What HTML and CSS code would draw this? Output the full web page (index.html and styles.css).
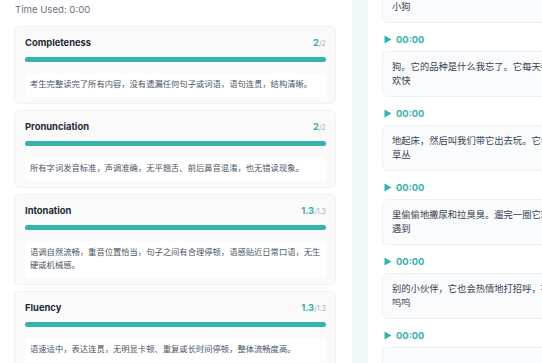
FILE: index.html
```html
<!DOCTYPE html>
<html lang="zh">
<head>
<meta charset="utf-8">
<title>Evaluation</title>
<link rel="stylesheet" href="styles.css">
</head>
<body>
<div class="page">
  <section class="left">
    <div class="time">Time Used: 0:00</div>
    <div class="card">
      <div class="card-head"><span class="title">Completeness</span><span class="score"><b>2</b>/2</span></div>
      <div class="bar"><div class="fill" style="width:100%"></div></div>
      <div class="desc">考生完整读完了所有内容，没有遗漏任何句子或词语，语句连贯，结构清晰。</div>
    </div>
    <div class="card">
      <div class="card-head"><span class="title">Pronunciation</span><span class="score"><b>2</b>/2</span></div>
      <div class="bar"><div class="fill" style="width:100%"></div></div>
      <div class="desc">所有字词发音标准，声调准确，无平翘舌、前后鼻音混淆，也无错读现象。</div>
    </div>
    <div class="card">
      <div class="card-head"><span class="title">Intonation</span><span class="score"><b>1.3</b>/1.3</span></div>
      <div class="bar"><div class="fill" style="width:100%"></div></div>
      <div class="desc">语调自然流畅，重音位置恰当，句子之间有合理停顿，语感贴近日常口语，无生硬或机械感。</div>
    </div>
    <div class="card">
      <div class="card-head"><span class="title">Fluency</span><span class="score"><b>1.3</b>/1.3</span></div>
      <div class="bar"><div class="fill" style="width:100%"></div></div>
      <div class="desc">语速适中，表达连贯，无明显卡顿、重复或长时间停顿，整体流畅度高。</div>
    </div>
  </section>
  <div class="strip"></div>
  <section class="right">
    <div class="list">
      <div class="seg">我家有一只可爱的<br>小狗</div>
      <div class="play"><svg class="tri" viewBox="0 0 8 9" width="8" height="9"><path d="M0.5 0.5 L7.5 4.5 L0.5 8.5 Z" fill="#38b2ac"/></svg><span>00:00</span></div>
      <div class="seg">狗。它的品种是什么我忘了。它每天都很开心<br>欢快</div>
      <div class="play"><svg class="tri" viewBox="0 0 8 9" width="8" height="9"><path d="M0.5 0.5 L7.5 4.5 L0.5 8.5 Z" fill="#38b2ac"/></svg><span>00:00</span></div>
      <div class="seg">地起床，然后叫我们带它出去玩。它会跑到<br>草丛</div>
      <div class="play"><svg class="tri" viewBox="0 0 8 9" width="8" height="9"><path d="M0.5 0.5 L7.5 4.5 L0.5 8.5 Z" fill="#38b2ac"/></svg><span>00:00</span></div>
      <div class="seg">里偷偷地撒尿和拉臭臭。遛完一圈它就回家<br>遇到</div>
      <div class="play"><svg class="tri" viewBox="0 0 8 9" width="8" height="9"><path d="M0.5 0.5 L7.5 4.5 L0.5 8.5 Z" fill="#38b2ac"/></svg><span>00:00</span></div>
      <div class="seg">别的小伙伴，它也会热情地打招呼，有时候<br>呜呜</div>
      <div class="play"><svg class="tri" viewBox="0 0 8 9" width="8" height="9"><path d="M0.5 0.5 L7.5 4.5 L0.5 8.5 Z" fill="#38b2ac"/></svg><span>00:00</span></div>
      <div class="seg seg-empty"></div>
    </div>
  </section>
</div>
</body>
</html>
```

FILE: styles.css
```css
html, body {
  margin: 0;
  padding: 0;
  width: 542px;
  height: 363px;
  overflow: hidden;
  background: #ffffff;
}
.page {
  display: flex;
  height: 363px;
  font-family: Inter, "Noto Sans CJK SC", sans-serif;
}
.left {
  width: 322px;
  flex: none;
  padding: 0 16px 0 14px;
  background: #ffffff;
  display: flex;
  flex-direction: column;
  gap: 6px;
}
.time {
  font-size: 9.6px;
  color: #6b7280;
  line-height: 12px;
  padding: 4px 0 4px 1px;
  margin-bottom: 0;
}
.card {
  flex: none;
  border: 1px solid #f0f1f2;
  border-radius: 6px;
  background: #fafafa;
  padding: 9px 9px 6.5px 10px;
}
.card-head {
  display: flex;
  justify-content: space-between;
  align-items: baseline;
  height: 13px;
  line-height: 13px;
}
.title {
  font-size: 9.4px;
  font-weight: 700;
  color: #1f2937;
}
.score {
  font-size: 7.2px;
  color: #a0aec0;
}
.score b {
  font-size: 9.4px;
  font-weight: 700;
  color: #38b2ac;
}
.bar {
  margin-top: 8px;
  height: 4.5px;
  border-radius: 3px;
  background: #e2e8f0;
}
.fill {
  height: 100%;
  border-radius: 3px;
  background: #38b2ac;
}
.desc {
  margin-top: 11px;
  background: #ffffff;
  border-radius: 3px;
  padding: 5.5px 3px 5.5px 5px;
  font-size: 8.3px;
  line-height: 13px;
  color: #4b5563;
}
.strip {
  width: 16px;
  flex: none;
  background: #f0f8fa;
}
.right {
  flex: none;
  width: 400px;
  background: #ffffff;
  padding-left: 14px;
}
.list {
  margin-top: -23px;
  display: flex;
  flex-direction: column;
}
.seg {
  border: 1px solid #eef0f2;
  border-radius: 6px;
  background: #fafbfc;
  padding: 8px 9px 8px 9px;
  font-size: 9.3px;
  line-height: 14px;
  color: #374151;
  white-space: nowrap;
}
.seg-empty {
  height: 28px;
}
.play {
  display: flex;
  align-items: center;
  gap: 4px;
  height: 12px;
  margin: 10px 0 6px 2px;
  font-size: 9.4px;
  font-weight: 700;
  color: #38b2ac;
}
.tri {
  display: block;
}
```
